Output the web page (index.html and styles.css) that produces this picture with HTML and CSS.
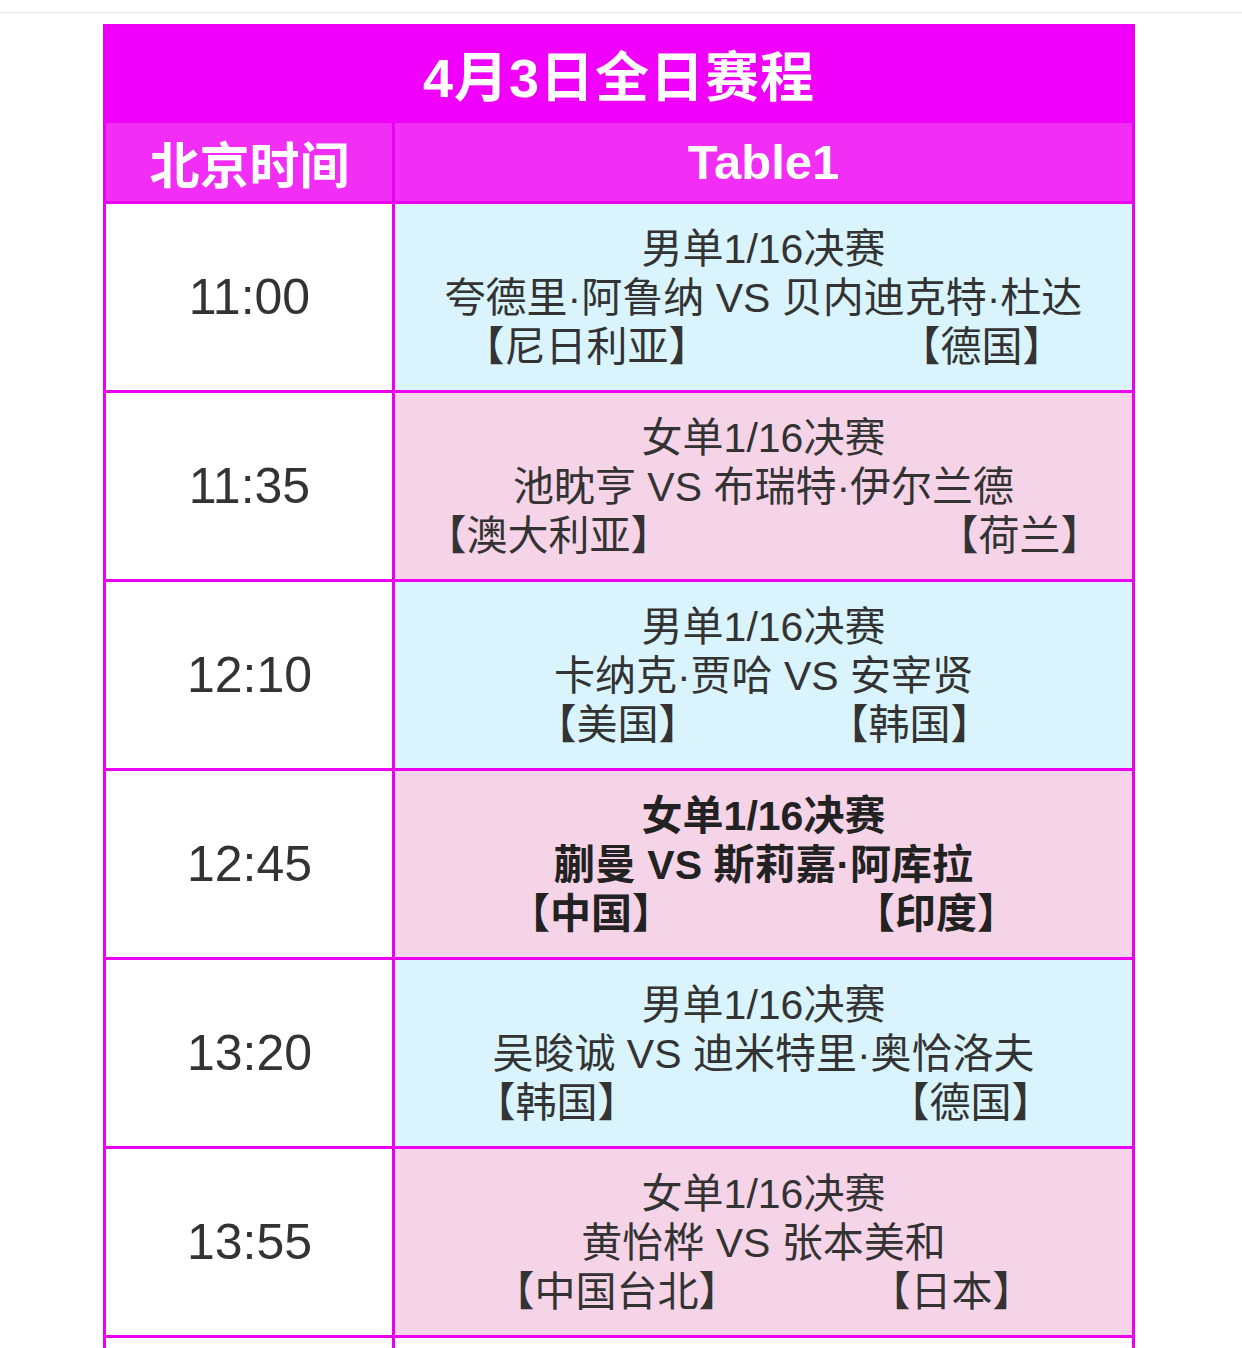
FILE: index.html
```html
<!DOCTYPE html>
<html lang="zh-CN">
<head>
<meta charset="utf-8">
<title>4月3日全日赛程</title>
<link rel="stylesheet" href="styles.css">
</head>
<body>
<div class="topbar"></div>
<table class="schedule">
  <colgroup>
    <col class="col-time">
    <col class="col-match">
  </colgroup>
  <tr class="title-row"><td colspan="2">4月3日全日赛程</td></tr>
  <tr class="head-row"><td class="c-time">北京时间</td><td class="c-match">Table1</td></tr>
  <tr class="row blue">
    <td class="c-time">11:00</td>
    <td class="c-match">
      <div class="line">男单1/16决赛</div>
      <div class="line">夸德里·阿鲁纳 VS 贝内迪克特·杜达</div>
      <div class="line countries g1"><span>【尼日利亚】</span><span>【德国】</span></div>
    </td>
  </tr>
  <tr class="row pink">
    <td class="c-time">11:35</td>
    <td class="c-match">
      <div class="line">女单1/16决赛</div>
      <div class="line">池眈亨 VS 布瑞特·伊尔兰德</div>
      <div class="line countries g2"><span>【澳大利亚】</span><span>【荷兰】</span></div>
    </td>
  </tr>
  <tr class="row blue">
    <td class="c-time">12:10</td>
    <td class="c-match">
      <div class="line">男单1/16决赛</div>
      <div class="line">卡纳克·贾哈 VS 安宰贤</div>
      <div class="line countries g3"><span>【美国】</span><span>【韩国】</span></div>
    </td>
  </tr>
  <tr class="row pink strong">
    <td class="c-time">12:45</td>
    <td class="c-match">
      <div class="line">女单1/16决赛</div>
      <div class="line">蒯曼 VS 斯莉嘉·阿库拉</div>
      <div class="line countries g4"><span>【中国】</span><span>【印度】</span></div>
    </td>
  </tr>
  <tr class="row blue">
    <td class="c-time">13:20</td>
    <td class="c-match">
      <div class="line">男单1/16决赛</div>
      <div class="line">吴晙诚 VS 迪米特里·奥恰洛夫</div>
      <div class="line countries g5"><span>【韩国】</span><span>【德国】</span></div>
    </td>
  </tr>
  <tr class="row pink">
    <td class="c-time">13:55</td>
    <td class="c-match">
      <div class="line">女单1/16决赛</div>
      <div class="line">黄怡桦 VS 张本美和</div>
      <div class="line countries g6"><span>【中国台北】</span><span>【日本】</span></div>
    </td>
  </tr>
  <tr class="row white">
    <td class="c-time">&nbsp;</td>
    <td class="c-match">&nbsp;</td>
  </tr>
</table>
</body>
</html>
```

FILE: styles.css
```css
html, body {
  margin: 0;
  padding: 0;
  background: #ffffff;
}

body {
  font-family: "Liberation Sans", "Noto Sans CJK SC", sans-serif;
  color: #333333;
}

.topbar {
  height: 12px;
  border-bottom: 1px solid #e6e6e6;
  margin-bottom: 11px;
}

.schedule {
  border-collapse: collapse;
  width: 1028px;
  margin: 0 auto;
  position: relative;
  left: -2px;
  table-layout: fixed;
}

.col-time {
  width: 289px;
}

.col-match {
  width: 739px;
}

.schedule td {
  border: 3px solid #ec00f2;
  padding: 0;
  text-align: center;
  vertical-align: middle;
}

.title-row td {
  background: #f000fa;
  color: #ffffff;
  font-weight: bold;
  font-size: 54px;
  height: 93px;
  letter-spacing: 1px;
  border-bottom-color: #f000fa;
}

.head-row td {
  background: #f22ef6;
  color: #ffffff;
  font-weight: bold;
  font-size: 50px;
  height: 78px;
}

.head-row .c-match {
  font-size: 49px;
}

.row td {
  height: 186px;
}

.row .c-time {
  background: #ffffff;
  font-size: 50px;
}

.row .c-match {
  font-size: 41px;
  height: 183px;
  padding-top: 3px;
}

.row.blue .c-match {
  background: #d9f4fc;
}

.row.pink .c-match {
  background: #f6d4e7;
}

.row.white .c-match {
  background: #ffffff;
}

.row.strong .c-match {
  font-weight: bold;
  color: #222222;
}

.line {
  line-height: 49px;
  white-space: nowrap;
}

.countries {
  display: flex;
  justify-content: center;
}

.g1 { gap: 190px; }
.g2 { gap: 266px; }
.g3 { gap: 128px; }
.g4 { gap: 181px; }
.g5 { gap: 250px; }
.g6 { gap: 130px; }
```
